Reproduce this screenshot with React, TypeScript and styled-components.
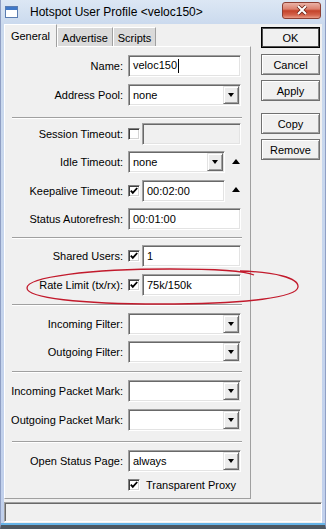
import React from "react";
import styled, { createGlobalStyle } from "styled-components";

const GlobalStyle = createGlobalStyle`
  html, body {
    margin: 0;
    padding: 0;
    background: #fff;
  }
  body {
    width: 326px;
    height: 529px;
    overflow: hidden;
    font-family: "Liberation Sans", Arial, sans-serif;
    font-size: 11px;
    color: #000;
  }
`;

const Window = styled.div`
  position: relative;
  width: 326px;
  height: 529px;
  box-sizing: border-box;
  display: flex;
  flex-direction: column;
  background: linear-gradient(#dce7f4 0, #cbdaee 24px, #c1d0ec 100%);
  border-left: 1px solid #8f9fc4;
  border-right: 1px solid #8f9fc4;
  border-bottom: 4px solid #4e5862;
  padding: 0 3px;
`;

const TitleBar = styled.div`
  height: 24px;
  display: flex;
  align-items: center;
  padding-left: 1px;
`;

const TitleText = styled.div`
  margin-left: 12px;
  font-size: 12px;
  color: #000;
`;

const CloseButton = styled.div`
  margin-left: auto;
  margin-right: 1px;
  margin-top: -4px;
  width: 39px;
  height: 17px;
  box-sizing: border-box;
  border: 1px solid #8c3f33;
  border-radius: 3px;
  background: linear-gradient(#eab2a6 0, #dc8270 40%, #c4432a 52%, #d3634b 80%, #e99b86 100%);
  display: flex;
  align-items: center;
  justify-content: center;
`;

const Client = styled.div`
  flex: 1;
  display: flex;
  flex-direction: column;
  background: #f0f0f0;
`;

const Main = styled.div`
  flex: 1;
  display: flex;
`;

const TabArea = styled.div`
  width: 247px;
  display: flex;
  flex-direction: column;
`;

const TabStrip = styled.div`
  height: 22px;
  display: flex;
  align-items: flex-end;
`;

const Tab = styled.div<{ $active?: boolean; $w: number }>`
  position: relative;
  z-index: ${(p) => (p.$active ? 1 : 0)};
  width: ${(p) => p.$w}px;
  height: ${(p) => (p.$active ? 23 : 19)}px;
  margin-bottom: ${(p) => (p.$active ? -1 : 0)}px;
  box-sizing: border-box;
  background: ${(p) => (p.$active ? "#f0f0f0" : "#dadada")};
  border-top: 1px solid #fff;
  border-left: 1px solid #fff;
  border-right: 1px solid #a0a0a0;
  display: flex;
  align-items: center;
  justify-content: center;
  padding-top: ${(p) => (p.$active ? 0 : 1)}px;
`;

const Panel = styled.div`
  flex: 1;
  box-sizing: border-box;
  border-top: 1px solid #fff;
  border-left: 1px solid #fff;
  border-right: 1px solid #a0a0a0;
  border-bottom: 1px solid #a0a0a0;
  padding-top: 8px;
  display: flex;
  flex-direction: column;
`;

const Section = styled.div`
  display: flex;
  flex-direction: column;
  gap: 6.5px;
`;

const Separator = styled.div<{ $above?: number; $below?: number }>`
  height: 0;
  border-top: 1px solid #a0a0a0;
  border-bottom: 1px solid #fff;
  margin: ${(p) => p.$above ?? 8}px 8px ${(p) => p.$below ?? 7}px 7px;
`;

const Row = styled.div`
  display: grid;
  grid-template-columns: 118px 113px;
  column-gap: 5px;
  align-items: center;
  height: 22px;
`;

const Label = styled.div`
  text-align: right;
  white-space: nowrap;
`;

const Controls = styled.div`
  display: flex;
  align-items: center;
  gap: 2px;
`;

const Field = styled.div<{ $disabled?: boolean; $w?: number }>`
  height: 22px;
  ${(p) => (p.$w ? `width: ${p.$w}px;` : "flex: 1;")}
  box-sizing: border-box;
  border: 1px solid;
  border-color: #a0a0a0 #fff #fff #a0a0a0;
  box-shadow: inset 1px 1px 0 #696969, inset -1px -1px 0 #e3e3e3;
  background: ${(p) => (p.$disabled ? "#f0f0f0" : "#fff")};
  display: flex;
  align-items: center;
  padding-left: 4px;
`;

const FieldText = styled.span`
  flex: 1;
  white-space: nowrap;
`;

const Caret = styled.span`
  display: inline-block;
  width: 1px;
  height: 14px;
  background: #000;
  vertical-align: middle;
  margin-left: 1px;
`;

const DropButton = styled.div`
  width: 16px;
  height: 18px;
  margin-right: 1px;
  box-sizing: border-box;
  border: 1px solid;
  border-color: #e3e3e3 #696969 #696969 #e3e3e3;
  box-shadow: inset 1px 1px 0 #fff, inset -1px -1px 0 #a0a0a0;
  background: #ececec;
  display: flex;
  align-items: center;
  justify-content: center;
  &::after {
    content: "";
    border-left: 3.5px solid transparent;
    border-right: 3.5px solid transparent;
    border-top: 4px solid #000;
  }
`;

const SpinUp = styled.div`
  margin-left: 5px;
  margin-top: -2px;
  width: 0;
  height: 0;
  border-left: 4.5px solid transparent;
  border-right: 4.5px solid transparent;
  border-bottom: 5px solid #000;
`;

const CheckBox = styled.div`
  width: 12px;
  height: 12px;
  flex: none;
  box-sizing: border-box;
  border: 1px solid;
  border-color: #808080 #fff #fff #808080;
  box-shadow: inset 1px 1px 0 #404040, inset -1px -1px 0 #d4d4d4;
  background: #fff;
  display: flex;
  align-items: center;
  justify-content: center;
`;

const CheckRow = styled.div`
  display: flex;
  align-items: center;
  gap: 6px;
  margin: 6px 0 0 123px;
  height: 14px;
`;

const ButtonColumn = styled.div`
  width: 59px;
  margin-left: 10px;
  padding-top: 3px;
  display: flex;
  flex-direction: column;
`;

const Button = styled.div<{ $default?: boolean; $gap?: number }>`
  height: 21px;
  margin-top: ${(p) => p.$gap ?? 0}px;
  box-sizing: border-box;
  border: 1px solid ${(p) => (p.$default ? "#000" : "#707070")};
  box-shadow: ${(p) =>
    p.$default
      ? "inset 1px 1px 0 #505050, inset -1px -1px 0 #505050"
      : "inset 1px 1px 0 #fff, inset -1px -1px 0 #a0a0a0"};
  background: #f0f0f0;
  display: flex;
  align-items: center;
  justify-content: center;
`;

const StatusBar = styled.div`
  height: 20px;
  margin: 3px 0 1px;
  box-sizing: border-box;
  border: 1px solid;
  border-color: #a0a0a0 #fff #fff #a0a0a0;
  box-shadow: inset 1px 1px 0 #696969;
`;

const BottomEdge = styled.div`
  height: 2px;
  margin: 0 -3px;
  background: #67b4e8;
`;

const Overlay = styled.svg`
  position: absolute;
  left: -1px;
  top: 0;
  pointer-events: none;
`;

const Check = () => (
  <CheckBox>
    <svg width="8" height="8" viewBox="0 0 8 8">
      <polyline points="0.8,3.6 2.8,5.8 7.2,1" fill="none" stroke="#000" strokeWidth="1.8" />
    </svg>
  </CheckBox>
);

const WinIcon = () => (
  <svg width="13" height="12" viewBox="0 0 13 12">
    <rect x="0.5" y="0.5" width="12" height="11" fill="#fff" stroke="#5a7cb0" />
    <rect x="1" y="1" width="11" height="3" fill="#3f78c8" />
  </svg>
);

const CloseX = () => (
  <svg width="12" height="10" viewBox="0 0 12 10">
    <path d="M2 1 L10 9 M10 1 L2 9" stroke="#6a2418" strokeWidth="3.6" />
    <path d="M2 1 L10 9 M10 1 L2 9" stroke="#fff" strokeWidth="2" />
  </svg>
);

const SelectField = ({ value = "", w }: { value?: string; w?: number }) => (
  <Field $w={w}>
    <FieldText>{value}</FieldText>
    <DropButton />
  </Field>
);

export default function App() {
  return (
    <>
      <GlobalStyle />
      <Window>
        <TitleBar>
          <WinIcon />
          <TitleText>Hotspot User Profile &lt;veloc150&gt;</TitleText>
          <CloseButton>
            <CloseX />
          </CloseButton>
        </TitleBar>
        <Client>
          <Main>
            <TabArea>
              <TabStrip>
                <Tab $active $w={53}>General</Tab>
                <Tab $w={56}>Advertise</Tab>
                <Tab $w={43}>Scripts</Tab>
              </TabStrip>
              <Panel>
                <Section>
                  <Row>
                    <Label>Name:</Label>
                    <Field>
                      <FieldText>
                        veloc150
                        <Caret />
                      </FieldText>
                    </Field>
                  </Row>
                  <Row>
                    <Label>Address Pool:</Label>
                    <SelectField value="none" />
                  </Row>
                </Section>
                <Separator $above={11} $below={4} />
                <Section>
                  <Row>
                    <Label>Session Timeout:</Label>
                    <Controls>
                      <CheckBox />
                      <Field $disabled />
                    </Controls>
                  </Row>
                  <Row>
                    <Label>Idle Timeout:</Label>
                    <Controls>
                      <SelectField value="none" w={97} />
                      <SpinUp />
                    </Controls>
                  </Row>
                  <Row>
                    <Label>Keepalive Timeout:</Label>
                    <Controls>
                      <Check />
                      <Field $w={83}>
                        <FieldText>00:02:00</FieldText>
                      </Field>
                      <SpinUp />
                    </Controls>
                  </Row>
                  <Row>
                    <Label>Status Autorefresh:</Label>
                    <Field>
                      <FieldText>00:01:00</FieldText>
                    </Field>
                  </Row>
                </Section>
                <Separator $above={7} $below={6} />
                <Section>
                  <Row>
                    <Label>Shared Users:</Label>
                    <Controls>
                      <Check />
                      <Field>
                        <FieldText>1</FieldText>
                      </Field>
                    </Controls>
                  </Row>
                  <Row>
                    <Label>Rate Limit (tx/rx):</Label>
                    <Controls>
                      <Check />
                      <Field>
                        <FieldText>75k/150k</FieldText>
                      </Field>
                    </Controls>
                  </Row>
                </Section>
                <Separator />
                <Section>
                  <Row>
                    <Label>Incoming Filter:</Label>
                    <SelectField />
                  </Row>
                  <Row>
                    <Label>Outgoing Filter:</Label>
                    <SelectField />
                  </Row>
                </Section>
                <Separator />
                <Section>
                  <Row>
                    <Label>Incoming Packet Mark:</Label>
                    <SelectField />
                  </Row>
                  <Row>
                    <Label>Outgoing Packet Mark:</Label>
                    <SelectField />
                  </Row>
                </Section>
                <Separator $above={10} />
                <Section>
                  <Row>
                    <Label>Open Status Page:</Label>
                    <SelectField value="always" />
                  </Row>
                </Section>
                <CheckRow>
                  <Check />
                  <span>Transparent Proxy</span>
                </CheckRow>
              </Panel>
            </TabArea>
            <ButtonColumn>
              <Button $default>OK</Button>
              <Button $gap={6}>Cancel</Button>
              <Button $gap={5}>Apply</Button>
              <Button $gap={12}>Copy</Button>
              <Button $gap={5}>Remove</Button>
            </ButtonColumn>
          </Main>
          <StatusBar />
        </Client>
        <BottomEdge />
        <Overlay width="326" height="529" viewBox="0 0 326 529">
          <path
            d="M240 271 C 275 272, 299 278, 298 287 C 297 297, 250 304, 160 304 C 80 304, 27 298, 27 288 C 27 277, 90 269, 170 269 C 215 269, 245 271, 254 275"
            fill="none"
            stroke="#c21a2c"
            strokeWidth="1.3"
          />
        </Overlay>
      </Window>
    </>
  );
}
